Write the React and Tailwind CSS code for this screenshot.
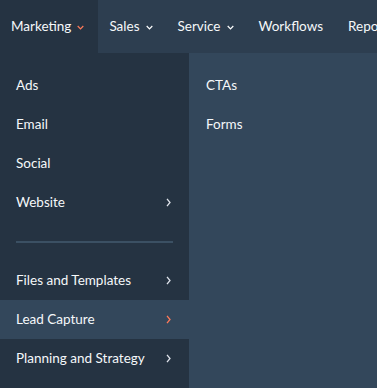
import React from 'react';

/* ── tiny chevrons ── */
const ChevronDown = ({ color = '#ffffff' }) => (
  <svg width="7" height="5" viewBox="0 0 7 5" aria-hidden="true" className="mt-[2px]">
    <polyline points="0.7,1 3.5,3.8 6.3,1" fill="none" stroke={color} strokeWidth="1.2" />
  </svg>
);

const ChevronRight = ({ color = '#dfe3eb' }) => (
  <svg width="5" height="9" viewBox="0 0 5 9" aria-hidden="true">
    <polyline points="1,0.8 4,4.5 1,8.2" fill="none" stroke={color} strokeWidth="1.3" />
  </svg>
);

const navItems = [
  { label: 'Marketing', caret: true, active: true },
  { label: 'Sales', caret: true },
  { label: 'Service', caret: true },
  { label: 'Workflows' },
  { label: 'Reports' },
];

const MenuRow = ({ label, sub, active }) => (
  <div
    className={`h-[39px] flex items-center justify-between pl-4 pr-[18px] ${
      active ? 'bg-[#33475b]' : ''
    }`}
  >
    <span>{label}</span>
    {sub && <ChevronRight color={active ? '#ff7a59' : '#dfe3eb'} />}
  </div>
);

export default function App() {
  return (
    <div
      className="w-[377px] h-[388px] overflow-hidden flex flex-col text-[#f5f8fa] text-[13.5px] bg-[#33475b]"
      style={{ fontFamily: 'Lato, "Open Sans", sans-serif' }}
    >
      {/* ── top nav ── */}
      <nav className="h-[53px] flex items-stretch bg-[#2d3e50] whitespace-nowrap shrink-0">
        {navItems.map(item => (
          <div
            key={item.label}
            className={`flex items-center gap-[6px] pl-[11px] pr-[14px] ${
              item.active ? 'bg-[#253342]' : ''
            }`}
          >
            <span>{item.label}</span>
            {item.caret && <ChevronDown color={item.active ? '#ff7a59' : '#ffffff'} />}
          </div>
        ))}
      </nav>

      {/* ── dropdown ── */}
      <div className="flex flex-1">
        <div className="w-[189px] bg-[#253342] pt-[13px]">
          <MenuRow label="Ads" />
          <MenuRow label="Email" />
          <MenuRow label="Social" />
          <MenuRow label="Website" sub />
          <div className="h-[39px] flex items-center px-4">
            <div className="h-[2px] w-full bg-[#3b5063]" />
          </div>
          <MenuRow label="Files and Templates" sub />
          <MenuRow label="Lead Capture" sub active />
          <MenuRow label="Planning and Strategy" sub />
        </div>
        <div className="flex-1 bg-[#33475b] pt-[13px]">
          <div className="h-[39px] flex items-center pl-[17px]">CTAs</div>
          <div className="h-[39px] flex items-center pl-[17px]">Forms</div>
        </div>
      </div>
    </div>
  );
}
